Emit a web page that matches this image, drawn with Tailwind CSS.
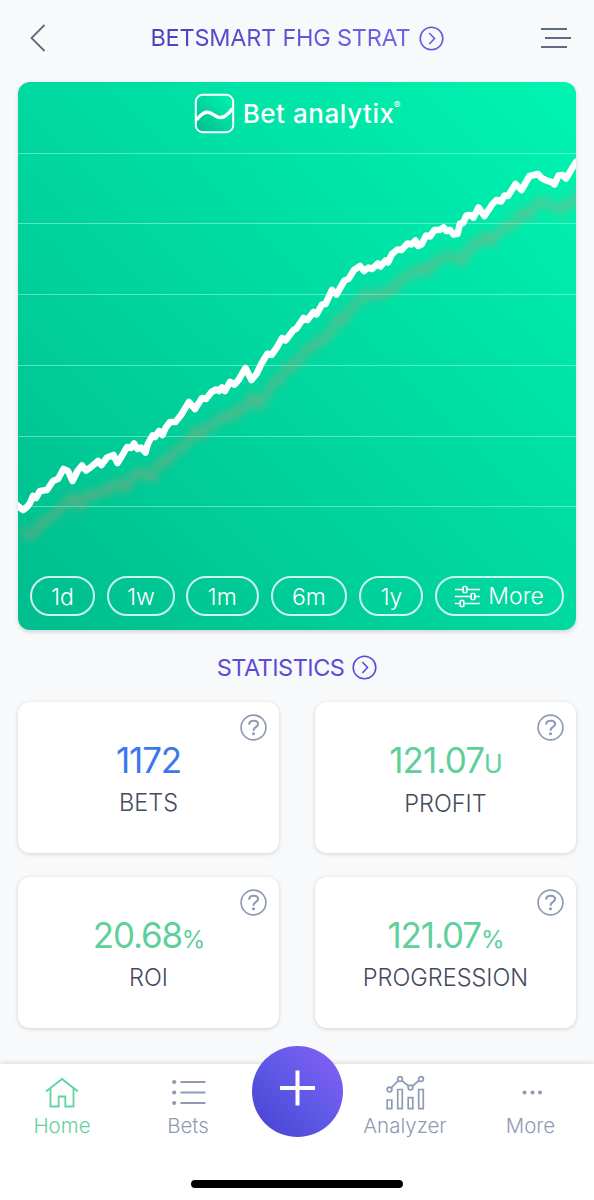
<!DOCTYPE html>
<html lang="en">
<head>
<meta charset="utf-8">
<title>Bet analytix</title>
<script src="https://cdn.jsdelivr.net/npm/@tailwindcss/browser@4"></script>
</head>
<body class="w-[594px] h-[1200px] overflow-hidden bg-[#f7f9fb] font-['Inter',sans-serif] font-light flex flex-col">
<header class="h-[82px] shrink-0 flex items-center justify-between pl-[29px] pr-[22px] pb-[6px] text-[#5f6b7e]">
  <svg class="w-[18px] h-[30px]" viewBox="0 0 18 30" fill="none" stroke="currentColor" stroke-width="1.8"><path d="M15.500 2 2.500 15l13 13"/></svg>
  <div class="ml-[7px] flex items-center gap-[8px] text-[#6a58dc]">
    <h1 class="text-[23.500px] leading-[30px] font-normal tracking-[-0.240px] whitespace-nowrap bg-linear-to-r from-[#4b3fbe] to-[#7664e6] bg-clip-text text-transparent">BETSMART FHG STRAT</h1>
    <svg class="w-[25px] h-[25px]" viewBox="0 0 25 25" fill="none" stroke="currentColor" stroke-width="1.6"><circle cx="12.500" cy="12.500" r="11.300"/><path d="m10.300 7 5.200 5.500-5.200 5.500"/></svg>
  </div>
  <svg class="w-[32px] h-[24px]" viewBox="0 0 32 24" fill="none" stroke="currentColor" stroke-width="2"><path d="M1 3h26M5 12h26M1 21h26"/></svg>
</header>

<section class="relative mx-[18px] h-[548px] shrink-0 rounded-[12px] overflow-hidden bg-linear-to-tr from-[#00bd8e] to-[#00f5b1] shadow-[0_2px_4px_rgba(0,0,0,0.15)] flex flex-col justify-between">
  <svg class="absolute inset-0 w-[558px] h-[548px]" viewBox="18 82 558 548" fill="none">
    <defs><filter id="soft" x="-10%" y="-10%" width="120%" height="120%" color-interpolation-filters="sRGB"><feGaussianBlur stdDeviation="4.500"/></filter></defs>
    <path d="M18 153.500h558M18 223.500h558M18 294.500h558M18 365.500h558M18 436.500h558M18 506.500h558" stroke="#d8ffe8" stroke-opacity=".42" stroke-width="1.200"/>
    <g filter="url(#soft)"><use href="#trend" transform="translate(7 27)" stroke="#dc8c72" stroke-opacity=".42"/></g>
    <use href="#trend" stroke="#fff"/>
    <defs><path id="trend" stroke-width="6.600" stroke-linecap="round" stroke-linejoin="round" d="M16 504 18 506 23 510 27 507 30 503 33 496 36 498 40 491 47 490 53 481 58 479 63.500 469 68 471 72.500 481 77.500 471 82 465.500 86 470.500 90.500 467.500 98 461 101.500 465 107 457.500 113.500 455 117.500 463 122.500 455 127 447 131 448 134 443.500 137.500 449 141 447.500 145.500 452.500 148 443.500 152.500 435.500 155 437 159 431 162.500 435 165.500 428 170 422 175.500 422 181 415 189 402 195 409 202 398 206 399 211.500 392 216 389.500 219 391 222 387.500 225 391 230 382 234.500 384.500 238.500 380 245.500 368 251.500 380 256.500 374 261.500 363.500 267.500 353.500 271.500 355 277.500 346.500 282 338 285.500 340.500 293.500 330 296.500 328.500 303.500 318 307.500 320 313.500 312 316.500 314.500 322 304.500 325.500 304 332 290 336.500 294.500 344.500 280.500 348.500 279 354 270 360 266 364 271 368.500 267.500 372 269 378 263.500 380.500 266.500 385.500 260.500 388 262.500 392 254 397.500 249.500 401.500 250 407.500 243.500 411.500 244.500 415.500 240.500 418 246 421.500 244.500 426 235.500 430 236.500 434.500 230 439.500 230 443.500 227.500 446.500 231 450 230 453.500 234.500 457.500 234 460 223.500 463 223 466.500 215.500 470 215 473.500 217.500 478.500 207.500 484.500 216 492.500 204 496.500 200 501 201.500 504.500 195.500 508 196 515.500 184 521.500 190 529.500 176 534 175 538 174 541.500 178 546.500 180.500 551.500 182 554.500 184.500 558.500 175.500 562.500 175 566 178.500 576 162"/></defs>
  </svg>
  <div class="relative flex items-start justify-center pt-[11px] text-white">
    <svg class="w-[41px] h-[41px]" viewBox="0 0 41 41" fill="none" stroke="currentColor">
      <defs><linearGradient id="lg" x1="1" y1="0" x2="0" y2="1"><stop stop-color="#00f5b1"/><stop offset="1" stop-color="#00bd8e"/></linearGradient></defs>
      <rect x="1.800" y="1.800" width="37.400" height="37.400" rx="7" fill="url(#lg)" stroke-width="2"/>
      <path d="M2.500 27c5-6.500 9-9.500 14-7l7 4c5 2 10-1.500 15-8.500" stroke-width="3.400"/>
    </svg>
    <span class="ml-[8px] mt-[4px] text-[26px] leading-[34px] font-medium tracking-[0.560px]">Bet analytix</span>
    <span class="-ml-px mt-[5px] text-[10px] leading-[14px] font-normal">®</span>
  </div>
  <div class="relative flex px-[12px] pb-[14px] text-white text-[23px] leading-[38px]">
    <button class="h-[40px] w-[65px] rounded-full border-2 border-white/80">1d</button>
    <button class="h-[40px] w-[68px] ml-[12px] rounded-full border-2 border-white/80">1w</button>
    <button class="h-[40px] w-[73px] ml-[11px] rounded-full border-2 border-white/80">1m</button>
    <button class="h-[40px] w-[77px] ml-[12px] rounded-full border-2 border-white/80">6m</button>
    <button class="h-[40px] w-[64px] ml-[12px] rounded-full border-2 border-white/80">1y</button>
    <button class="h-[40px] w-[129px] ml-[12px] rounded-full border-2 border-white/80 flex items-center justify-center gap-[8px]">
      <svg class="w-[25px] h-[23px]" viewBox="0 0 25 23" fill="none" stroke="currentColor" stroke-width="1.600"><path d="M0 4.500h8.200M11.800 4.500H25M0 11.500h16.200M19.800 11.500H25M0 18.500h5.200M8.800 18.500H25"/><rect x="8.200" y="1.500" width="3.600" height="6" rx=".8"/><rect x="16.200" y="8.500" width="3.600" height="6" rx=".8"/><rect x="5.200" y="15.500" width="3.600" height="6" rx=".8"/></svg>
      <span>More</span>
    </button>
  </div>
</section>

<div class="h-[72px] shrink-0 flex items-center justify-center gap-[8px] pt-[3px] text-[#5b4cd8]">
  <h2 class="text-[23.500px] leading-[30px] font-normal tracking-[-0.500px]">STATISTICS</h2>
  <svg class="w-[25px] h-[25px]" viewBox="0 0 25 25" fill="none" stroke="currentColor" stroke-width="1.600"><circle cx="12.500" cy="12.500" r="11.300"/><path d="m10.300 7 5.200 5.500-5.200 5.500"/></svg>
</div>

<main class="grid grid-cols-2 gap-x-[36px] gap-y-[24px] px-[18px] text-center text-[#434b5c]">
  <article class="relative h-[151px] rounded-[12px] bg-white shadow-[0_1px_4px_rgba(0,0,0,0.16)] pt-[36px]">
    <svg class="absolute right-[12px] top-[12px] w-[27px] h-[27px] text-[#8f9bb3]" viewBox="0 0 27 27" fill="none" stroke="currentColor" stroke-width="1.700"><circle cx="13.500" cy="13.500" r="12.400"/><path stroke-width="2.100" stroke-linecap="round" d="M9.200 9.800c.6-4.200 8.900-4 8.900.2 0 3-4.500 3.200-4.500 6"/><circle cx="13.500" cy="19.800" r=".7"/></svg>
    <div class="h-[45px] text-[35px] leading-[44px] font-normal tracking-[-1.200px] text-[#3b78ec]">1172</div>
    <div class="text-[23.500px] leading-[40px]">BETS</div>
  </article>
  <article class="relative h-[151px] rounded-[12px] bg-white shadow-[0_1px_4px_rgba(0,0,0,0.16)] pt-[36px]">
    <svg class="absolute right-[12px] top-[12px] w-[27px] h-[27px] text-[#8f9bb3]" viewBox="0 0 27 27" fill="none" stroke="currentColor" stroke-width="1.700"><circle cx="13.500" cy="13.500" r="12.400"/><path stroke-width="2.100" stroke-linecap="round" d="M9.200 9.800c.6-4.200 8.900-4 8.900.2 0 3-4.500 3.200-4.500 6"/><circle cx="13.500" cy="19.800" r=".7"/></svg>
    <div class="h-[46px] text-[35px] leading-[44px] font-normal tracking-[-0.900px] text-[#5fcf9c]">121.07<span class="text-[25px]">U</span></div>
    <div class="text-[23.500px] leading-[40px]">PROFIT</div>
  </article>
  <article class="relative h-[151px] rounded-[12px] bg-white shadow-[0_1px_4px_rgba(0,0,0,0.16)] pt-[36px]">
    <svg class="absolute right-[12px] top-[12px] w-[27px] h-[27px] text-[#8f9bb3]" viewBox="0 0 27 27" fill="none" stroke="currentColor" stroke-width="1.700"><circle cx="13.500" cy="13.500" r="12.400"/><path stroke-width="2.100" stroke-linecap="round" d="M9.200 9.800c.6-4.200 8.900-4 8.900.2 0 3-4.500 3.200-4.500 6"/><circle cx="13.500" cy="19.800" r=".7"/></svg>
    <div class="h-[45px] text-[35px] leading-[44px] font-normal tracking-[-1.200px] text-[#5fcf9c]">20.68<span class="text-[24px]">%</span></div>
    <div class="text-[23.500px] leading-[40px]">ROI</div>
  </article>
  <article class="relative h-[151px] rounded-[12px] bg-white shadow-[0_1px_4px_rgba(0,0,0,0.16)] pt-[36px]">
    <svg class="absolute right-[12px] top-[12px] w-[27px] h-[27px] text-[#8f9bb3]" viewBox="0 0 27 27" fill="none" stroke="currentColor" stroke-width="1.700"><circle cx="13.500" cy="13.500" r="12.400"/><path stroke-width="2.100" stroke-linecap="round" d="M9.200 9.800c.6-4.200 8.900-4 8.900.2 0 3-4.500 3.200-4.500 6"/><circle cx="13.500" cy="19.800" r=".7"/></svg>
    <div class="h-[45px] text-[35px] leading-[44px] font-normal tracking-[-1.100px] text-[#5fcf9c]">121.07<span class="text-[24px]">%</span></div>
    <div class="text-[23.500px] leading-[40px]">PROGRESSION</div>
  </article>
</main>

<nav class="relative mt-auto h-[136px] shrink-0 bg-white shadow-[0_-1px_5px_rgba(0,0,0,0.13)] flex flex-col justify-between text-[#8f9bb3]">
  <div class="flex justify-between text-[20.500px] leading-[26px]">
    <a class="w-[124px] flex flex-col items-center pt-[10px] text-[#5fd3a2]">
      <svg class="w-[36px] h-[39px]" viewBox="0 0 36 39" fill="none" stroke="currentColor" stroke-width="1.800"><path d="M2 17.500 18 5l16 12.500M6.500 14.500V32.500h8.200V22.500h6.600v10h8.200v-18"/></svg>
      <span>Home</span>
    </a>
    <a class="w-[124px] flex flex-col items-center pt-[10px] pl-[4px]">
      <svg class="w-[36px] h-[39px]" viewBox="0 0 36 39" fill="none" stroke="currentColor" stroke-width="1.900"><path d="M10.500 8h25M10.500 18.500h25M10.500 29h25"/><g fill="currentColor" stroke="none"><circle cx="4.200" cy="8" r="2.100"/><circle cx="4.200" cy="18.500" r="2.100"/><circle cx="4.200" cy="29" r="2.100"/></g></svg>
      <span>Bets</span>
    </a>
    <div class="w-[94px]"></div>
    <a class="w-[124px] flex flex-col items-center pt-[10px] pl-[2px]">
      <svg class="w-[40px] h-[39px]" viewBox="0 0 40 39" fill="none" stroke="currentColor" stroke-width="1.700"><circle cx="4.500" cy="15.500" r="2.400"/><circle cx="15" cy="5" r="2.400"/><circle cx="25.500" cy="13.500" r="2.400"/><circle cx="36" cy="5" r="2.400"/><path d="m6.200 13.800 7.100-7.100M16.900 6.600l6.700 5.400M27.400 12l6.700-5.500"/><path d="M2.200 26h4.600v8.700H2.200zM12.700 15.500h4.600v19.200h-4.600zM23.200 23.700h4.600v11h-4.600zM33.700 15.500h4.600v19.200h-4.600z"/></svg>
      <span>Analyzer</span>
    </a>
    <a class="w-[128px] flex flex-col items-center pt-[10px] pl-[1px]">
      <svg class="w-[36px] h-[39px]" viewBox="0 0 36 39" fill="currentColor"><circle cx="11.500" cy="18.500" r="2"/><circle cx="19.500" cy="18.500" r="2"/><circle cx="27" cy="18.500" r="2"/></svg>
      <span>More</span>
    </a>
  </div>
  <button aria-label="Add" class="absolute left-[252px] top-[-18px] w-[91px] h-[91px] rounded-full bg-linear-to-tr from-[#4640cf] via-[#5f59e8] to-[#8860f5] flex justify-center pt-[24px]">
    <svg class="w-[36px] h-[36px]" viewBox="0 0 36 36" stroke="#fff" stroke-width="4"><path d="M0 18h35M17.500.500v35"/></svg>
  </button>
  <div class="mx-auto mb-[12px] h-[8px] w-[212px] rounded-full bg-black"></div>
</nav>
</body>
</html>
